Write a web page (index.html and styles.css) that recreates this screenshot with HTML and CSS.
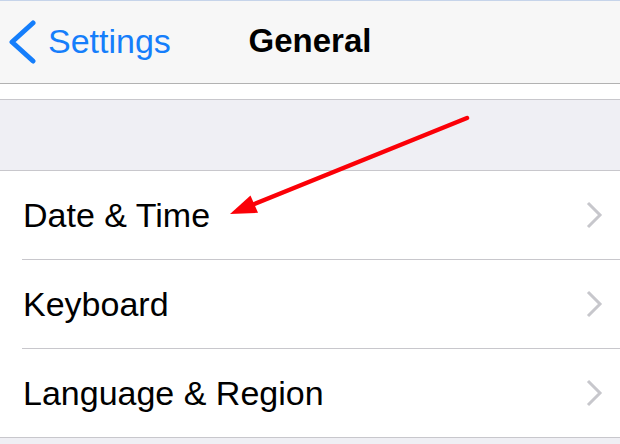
FILE: index.html
```html
<!DOCTYPE html>
<html lang="en">
<head>
  <meta charset="UTF-8">
  <meta name="viewport" content="width=device-width, initial-scale=1.0">
  <title>General</title>
  <link rel="stylesheet" href="styles.css">
</head>
<body>
  <div class="screen">
    <!-- Navigation bar -->
    <header class="nav">
      <a href="#" class="nav-back">
        <svg class="back-chevron" width="28" height="46" viewBox="0 0 28 46">
          <polyline points="25,4 4,23 25,42" fill="none" stroke="#157efb" stroke-width="5" stroke-linecap="round" stroke-linejoin="round"/>
        </svg>
        <span>Settings</span>
      </a>
      <h1 class="nav-title">General</h1>
      <div></div>
    </header>

    <div class="gap"></div>
    <div class="section-header"></div>

    <!-- Settings rows -->
    <ul class="group">
      <li class="row">
        <span class="row-label">Date &amp; Time</span>
        <svg class="row-chevron" width="18" height="28" viewBox="0 0 18 28">
          <polyline points="3,2 15,14 3,26" fill="none" stroke="#c7c7cc" stroke-width="3"/>
        </svg>
      </li>
      <li class="row">
        <span class="row-label">Keyboard</span>
        <svg class="row-chevron" width="18" height="28" viewBox="0 0 18 28">
          <polyline points="3,2 15,14 3,26" fill="none" stroke="#c7c7cc" stroke-width="3"/>
        </svg>
      </li>
      <li class="row">
        <span class="row-label">Language &amp; Region</span>
        <svg class="row-chevron" width="18" height="28" viewBox="0 0 18 28">
          <polyline points="3,2 15,14 3,26" fill="none" stroke="#c7c7cc" stroke-width="3"/>
        </svg>
      </li>
    </ul>

    <!-- Annotation arrow drawn over the screenshot -->
    <svg class="annotation" width="620" height="444" viewBox="0 0 620 444">
      <line x1="467" y1="118" x2="252" y2="205" stroke="#fb0007" stroke-width="4.5" stroke-linecap="round"/>
      <polygon points="230,214 250.5,195.5 258,212.8" fill="#fb0007"/>
    </svg>
  </div>
</body>
</html>
```

FILE: styles.css
```css
body {
  margin: 0;
  font-family: "Liberation Sans", Arial, sans-serif;
  background-color: #efeff4;
}
.screen {
  position: relative;
  width: 620px;
  height: 444px;
  overflow: hidden;
  background-color: #efeff4;
  border-top: 1px solid #c6d4ea;
  box-sizing: border-box;
}
.nav {
  display: grid;
  grid-template-columns: 1fr auto 1fr;
  align-items: center;
  height: 82px;
  padding-bottom: 3px;
  box-sizing: border-box;
  background-color: #f7f7f7;
  border-bottom: 1px solid #b2b2b2;
  box-sizing: content-box;
  height: 79px;
}
.nav-back {
  display: flex;
  align-items: center;
  gap: 12px;
  padding-left: 8px;
  color: #157efb;
  text-decoration: none;
  font-size: 34px;
  line-height: 1;
}
.back-chevron {
  flex: none;
  margin-top: 2px;
}
.nav-title {
  margin: 0;
  font-size: 33px;
  line-height: 1;
  font-weight: bold;
  color: #000;
}
.gap {
  height: 15px;
  background-color: #fff;
  border-bottom: 1px solid #c8c7cc;
}
.section-header {
  height: 70px;
  background-color: #efeff4;
}
.group {
  list-style: none;
  margin: 0;
  padding: 0 0 0 22px;
  background-color: #fff;
  border-top: 1px solid #c8c7cc;
  border-bottom: 1px solid #c8c7cc;
}
.row {
  display: flex;
  align-items: center;
  justify-content: space-between;
  height: 88px;
  padding-right: 17px;
  border-bottom: 1px solid #c8c7cc;
}
.row:last-child {
  border-bottom: none;
}
.row-label {
  padding-left: 1px;
  font-size: 34px;
  line-height: 1;
  color: #000;
}
.row-chevron {
  flex: none;
}
.annotation {
  position: absolute;
  left: 0;
  top: -1px;
  pointer-events: none;
}
```
